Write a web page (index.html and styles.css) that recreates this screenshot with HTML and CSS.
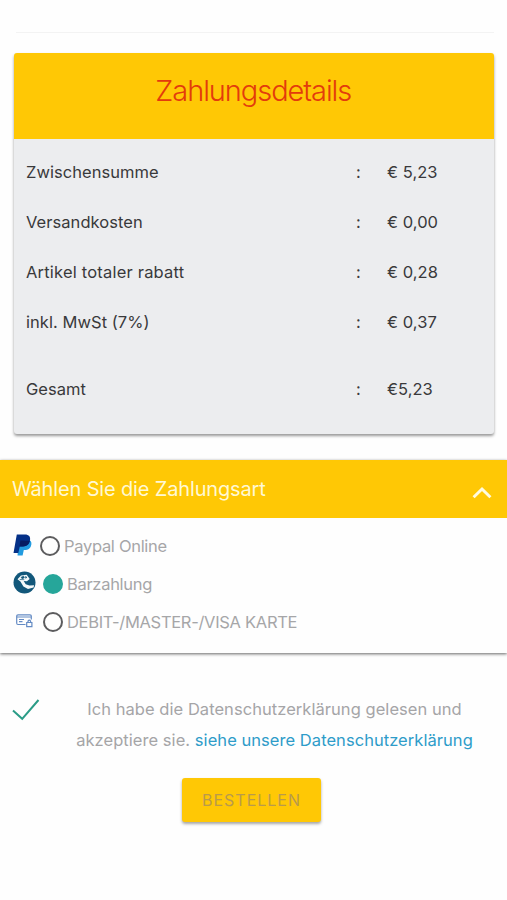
FILE: index.html
```html
<!DOCTYPE html>
<html lang="de">
<head>
<meta charset="utf-8">
<title>Zahlungsdetails</title>
<link rel="stylesheet" href="styles.css">
</head>
<body>
<hr class="divider">
<section class="summary">
  <h1 class="summary-title"><span>Zahlungsdetails</span></h1>
  <div class="summary-body">
    <div class="row"><span>Zwischensumme</span><span>:</span><span>€ 5,23</span></div>
    <div class="row"><span>Versandkosten</span><span>:</span><span>€ 0,00</span></div>
    <div class="row"><span class="loose">Artikel totaler rabatt</span><span>:</span><span>€ 0,28</span></div>
    <div class="row"><span>inkl. MwSt (7%)</span><span>:</span><span>€ 0,37</span></div>
    <div class="row total"><span>Gesamt</span><span>:</span><span>€5,23</span></div>
  </div>
</section>
<section class="methods">
  <header class="methods-head">
    <h2 class="methods-title">Wählen Sie die Zahlungsart</h2>
    <svg class="chevron" width="20" height="13" viewBox="0 0 20 13"><path d="M1.600 11.300 10 3 18.400 11.300" fill="none" stroke="#fffbe0" stroke-width="3"/></svg>
  </header>
  <div class="options">
    <label class="option">
      <svg class="logo paypal" width="20" height="24" viewBox="0 0 20 24"><path d="M6 7h10.500c2.200 1.200 2.400 4 1.300 6.500-1.300 3-4 3.500-7 3.500l-1.200 5.500H4.500z" fill="#229be0"/><path d="M3.800 1.500h8c4.200 0 5.900 2.300 5.200 5.800-.9 4.500-3.700 6.200-7.800 6.200H6.800L5.300 20H.5z" fill="#043087"/><path d="M7.400 7.600c3 .2 6.400 0 9.500.2-1 4.200-3.700 5.700-7.700 5.700H6.500z" fill="#061c61"/></svg>
      <span class="radio"></span><span>Paypal Online</span>
    </label>
    <label class="option">
      <svg class="logo cash" width="23" height="23" viewBox="0 0 23 23"><circle cx="11.500" cy="11.500" r="11" fill="#12577a"/><path d="M4.500 8.300 8 4.500l5.700-.7 3 4.300-2.800 2.200-3.200-.3 2 3.300 3.800 1.200 4.600-.3-.5 2.200-5.600 1.500-4.600-2.500-3-5z" fill="#f4f9fa"/><path d="m8.200 6.200 2.500-1 .6 1.600-2.200 1zm4.100-.8 1.700 1-1.600.8M6.700 8.500l4.600.2" fill="#12577a" stroke="#12577a" stroke-width=".7"/></svg>
      <span class="radio checked"></span><span>Barzahlung</span>
    </label>
    <label class="option">
      <svg class="logo card" width="17" height="14" viewBox="0 0 17 14"><g fill="none" stroke="#648bc4" stroke-width="1.200"><path d="M9.500 10.500H2Q.7 10.500.7 9V2Q.7.800 2 .800h12q1.300 0 1.300 1.300v3.400M.7 3h14.600M3 5.500h5M3 7.700h3.500"/><path d="M10.700 8.500h5.200v4.200h-5.200zM12 8.500V7.200q1.300-2 2.600 0v1.300"/></g></svg>
      <span class="radio"></span><span class="caps">DEBIT-/MASTER-/VISA KARTE</span>
    </label>
  </div>
</section>
<div class="consent">
  <svg class="check" width="28" height="22" viewBox="0 0 28 22"><path d="m1 11.500 9.200 8.300L26.500 1" fill="none" stroke="#2b9c87" stroke-width="2"/></svg>
  <p class="consent-text">Ich habe die Datenschutzerklärung gelesen und<br>akzeptiere sie. <a class="link">siehe unsere Datenschutzerklärung</a></p>
</div>
<button class="order" type="button">BESTELLEN</button>
</body>
</html>
```
FILE: styles.css
```css
* { box-sizing: border-box; }
body {
  margin: 0;
  min-height: 900px;
  padding-top: 32px;
  background: #fefefe;
  color: #39393b;
  font-family: Inter, "Liberation Sans", sans-serif;
  font-size: 16.5px;
}
.divider { height: 1px; margin: 0 13px 20px 16px; border: 0; background: #f3f3f3; }
.summary {
  height: 381px;
  margin: 0 13px 0 13.5px;
  border-radius: 3px;
  background: #ecedef;
  box-shadow: 0 2px 3px rgba(0, 0, 0, .4);
}
.summary-title {
  height: 86px;
  margin: 0;
  padding: 20px 1px 0 0;
  border-radius: 3px 3px 0 0;
  background: #ffc805;
  color: #e33b0c;
  font-size: 29px;
  font-weight: 300;
  letter-spacing: -1.07px;
  line-height: 36px;
  text-align: center;
}
.summary-body { padding: 8px 12.5px 0; }
.row {
  display: grid;
  grid-template-columns: 330px 31px 1fr;
  align-items: center;
  height: 50px;
  letter-spacing: .05px;
}
.loose { letter-spacing: .2px; }
.total { margin-top: 17px; }
.methods {
  margin-top: 26px;
  background: #fefefe;
  box-shadow: 0 1px 3px rgba(0, 0, 0, .6);
}
.methods-head {
  display: flex;
  justify-content: space-between;
  align-items: center;
  height: 58px;
  padding: 0 15px 0 12px;
  background: #ffc805;
}
.methods-title { margin: 0; color: #fff8d4; font-size: 20px; font-weight: 400; letter-spacing: -.15px; }
.chevron { margin-top: 7px; }
.options { height: 135px; padding: 9px 13px 0; color: #a6a6a8; letter-spacing: -.3px; }
.option { display: flex; align-items: center; height: 38px; }
.logo { flex: none; width: 23px; margin-right: 7px; }
.paypal { width: 20px; margin-top: -3px; }
.cash { margin: -4px 7px 0 0; }
.card { width: 17px; margin: -2px 10px 0 3px; }
.radio {
  flex: none;
  width: 20px;
  height: 20px;
  margin-right: 4px;
  border: 2.5px solid #5c5c5e;
  border-radius: 50%;
}
.checked { border-color: #26a69a; background: #26a69a; }
.consent { display: flex; margin-top: 41px; padding: 0 0 0 12px; }
.check { flex: none; margin-top: 5px; }
.consent-text {
  width: 469px;
  margin: 0;
  padding-left: 2px;
  color: #a5a5a7;
  letter-spacing: .05px;
  line-height: 31px;
  text-align: center;
}
.link { color: #2e9cc9; }
.order {
  display: block;
  width: 139px;
  height: 44px;
  margin: 22px 0 0 182px;
  padding: 0;
  border: 0;
  border-radius: 3px;
  background: #ffc805;
  box-shadow: 0 2px 3px rgba(0, 0, 0, .35);
  color: #b99a4c;
  font: 400 16px Inter, sans-serif;
  letter-spacing: 1px;
}
```
